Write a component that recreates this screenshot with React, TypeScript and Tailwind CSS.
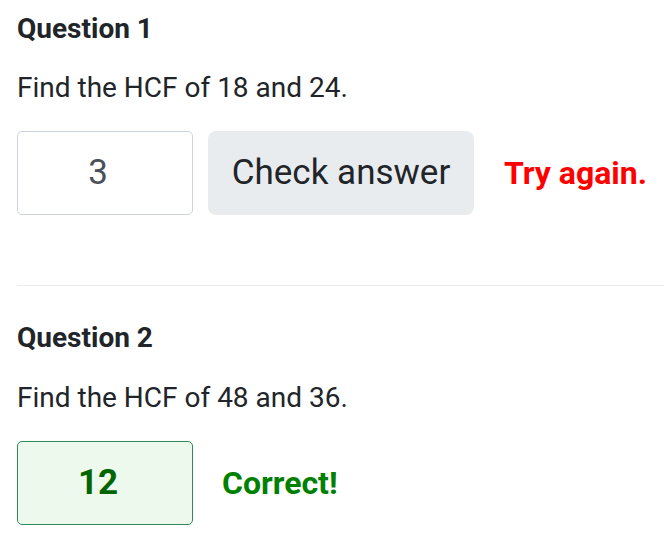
import React from "react";

export default function App() {
  const font = { fontFamily: "Roboto, 'Liberation Sans', sans-serif" };
  return (
    <div className="w-[664px] h-[546px] overflow-hidden bg-white pl-[17px] pt-[12px] text-[#212529]" style={font}>
      <section>
        <h3 className="text-[28px] font-bold leading-[normal] m-0">Question 1</h3>
        <p className="text-[28px] leading-[normal] mt-[26px]">Find the HCF of 18 and 24.</p>
        <div className="flex items-center mt-[27px]">
          <div className="w-[176px] h-[84px] pr-[14px] border-[1.5px] border-[#ced4da] rounded-[5px] flex items-center justify-center text-[35px] text-[#495057]">
            3
          </div>
          <button className="ml-[15px] w-[266px] h-[84px] rounded-[8px] bg-[#e9ecef] text-[35px] text-[#212529] flex items-center justify-center">
            Check answer
          </button>
          <span className="ml-[30px] text-[32px] font-bold text-[#ff0000]">Try again.</span>
        </div>
      </section>
      <div className="h-px bg-[#e9ecef] mt-[70px]" />
      <section className="mt-[35px]">
        <h3 className="text-[28px] font-bold leading-[normal] m-0">Question 2</h3>
        <p className="text-[28px] leading-[normal] mt-[27px]">Find the HCF of 48 and 36.</p>
        <div className="flex items-center mt-[27px]">
          <div className="w-[176px] h-[84px] pr-[14px] border-[1.5px] border-[#2e8b57] rounded-[5px] bg-[#edf9ec] flex items-center justify-center text-[35px] font-bold text-[#006400]">
            12
          </div>
          <span className="ml-[29px] text-[32px] font-bold text-[#008000]">Correct!</span>
        </div>
      </section>
    </div>
  );
}
